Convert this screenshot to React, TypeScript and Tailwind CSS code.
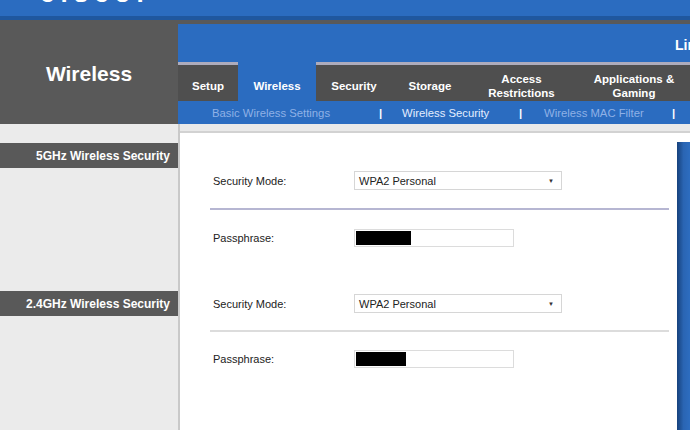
import React from "react";

const tabs = [
  { label: ["Setup"], w: "w-[60px]" },
  { label: ["Wireless"], w: "w-[78px]", active: true },
  { label: ["Security"], w: "w-[76px]" },
  { label: ["Storage"], w: "w-[76px]" },
  { label: ["Access", "Restrictions"], w: "w-[107px]" },
  { label: ["Applications &", "Gaming"], w: "w-[118px]" },
];

function Select() {
  return (
    <div className="flex h-[19px] w-[208px] items-center justify-between border border-[#d6d6d6] bg-white pl-[4px] pr-[7px] pt-[2px] text-[11px] text-[#222]">
      <span>WPA2 Personal</span>
      <span className="text-[6px] text-[#333]">▼</span>
    </div>
  );
}

function Passphrase({ w }: { w: string }) {
  return (
    <div className="flex h-[18px] w-[160px] items-center border border-[#dcdcdc] bg-white px-[1px]">
      <div className={`h-[14px] bg-black ${w}`} />
    </div>
  );
}

function Row({ label, children }: { label: string; children: React.ReactNode }) {
  return (
    <div className="flex h-[19px] items-center">
      <div className="w-[144px] pl-[3px] pt-[2px] text-[11px] text-[#222]">{label}</div>
      {children}
    </div>
  );
}

export default function App() {
  return (
    <div
      className="h-[430px] w-[690px] overflow-hidden bg-[#ebebeb]"
      style={{ fontFamily: '"Liberation Sans", Arial, sans-serif' }}
    >
      {/* top bar */}
      <div className="h-[20px] overflow-hidden border-b-[4px] border-[#1f579f] bg-[#2b6cc0]">
        <div className="-mt-[26px] pl-[40px] text-[26px] font-bold tracking-[6px] text-white">cisco.</div>
      </div>

      {/* header band */}
      <div className="flex h-[104px] bg-[#595959]">
        <div className="flex w-[178px] shrink-0 items-center justify-center pt-[4px] text-[21px] font-bold text-white">
          Wireless
        </div>
        <div className="flex min-w-0 flex-1 flex-col overflow-hidden pt-[4px]">
          <div className="flex h-[38px] items-center justify-end bg-[#2b6cc0] text-[14px] font-bold text-white">
            <span className="-mr-[6px] mt-[4px]">Lin</span>
          </div>
          <div className="flex h-[39px] bg-[#4f4f4f]">
            {tabs.map((t) => (
              <div
                key={t.label.join()}
                className={`flex ${t.w} shrink-0 flex-col items-center justify-center border-t-[3px] pt-[5px] text-center text-[11.5px] font-bold leading-[14px] text-white ${
                  t.active ? "border-[#2b6cc0] bg-[#2b6cc0]" : "border-[#aeacbc]"
                }`}
              >
                {t.label.map((l) => (
                  <span key={l}>{l}</span>
                ))}
              </div>
            ))}
          </div>
          <div className="flex h-[23px] items-center bg-[#2b6cc0] pl-[34px] pt-[1px] text-[11.3px]">
            <span className="w-[167px] shrink-0 text-[#8fb1e6]">Basic Wireless Settings</span>
            <span className="w-[23px] shrink-0 font-bold text-white">|</span>
            <span className="w-[117px] shrink-0 text-[#e4eeff]">Wireless Security</span>
            <span className="w-[25px] shrink-0 font-bold text-white">|</span>
            <span className="w-[128px] shrink-0 text-[#8fb1e6]">Wireless MAC Filter</span>
            <span className="font-bold text-white">|</span>
          </div>
        </div>
      </div>

      {/* body */}
      <div className="flex h-[306px]">
        <div className="flex w-[178px] shrink-0 flex-col pt-[19px]">
          <div className="flex h-[25px] items-center justify-end bg-[#595959] pr-[8px] text-[12px] font-bold text-white">
            5GHz Wireless Security
          </div>
          <div className="h-[123px]" />
          <div className="flex h-[25px] items-center justify-end bg-[#595959] pr-[8px] text-[12px] font-bold text-white">
            2.4GHz Wireless Security
          </div>
        </div>
        <div className="flex flex-1 flex-col border-l-[2px] border-[#c9c9c9]">
          <div className="h-[9px] border-b-[2px] border-[#d2d2d2] bg-[#e9e9e9]" />
          <div className="flex flex-1 bg-white">
            <div className="flex w-[497px] flex-col pl-[30px] pr-[8px] pt-[38px]">
              <Row label="Security Mode:">
                <Select />
              </Row>
              <div className="mt-[18px] h-[2px] bg-[#b6b6d2]" />
              <div className="mt-[18px]">
                <Row label="Passphrase:">
                  <Passphrase w="w-[55px]" />
                </Row>
              </div>
              <div className="mt-[47px]">
                <Row label="Security Mode:">
                  <Select />
                </Row>
              </div>
              <div className="mt-[17px] h-[2px] bg-[#dcdcdc]" />
              <div className="mt-[17px]">
                <Row label="Passphrase:">
                  <Passphrase w="w-[50px]" />
                </Row>
              </div>
            </div>
            <div className="mt-[9px] flex-1 bg-gradient-to-r from-[#17427d] via-[#2a65b3] to-[#2d6dc0]" />
          </div>
        </div>
      </div>
    </div>
  );
}
